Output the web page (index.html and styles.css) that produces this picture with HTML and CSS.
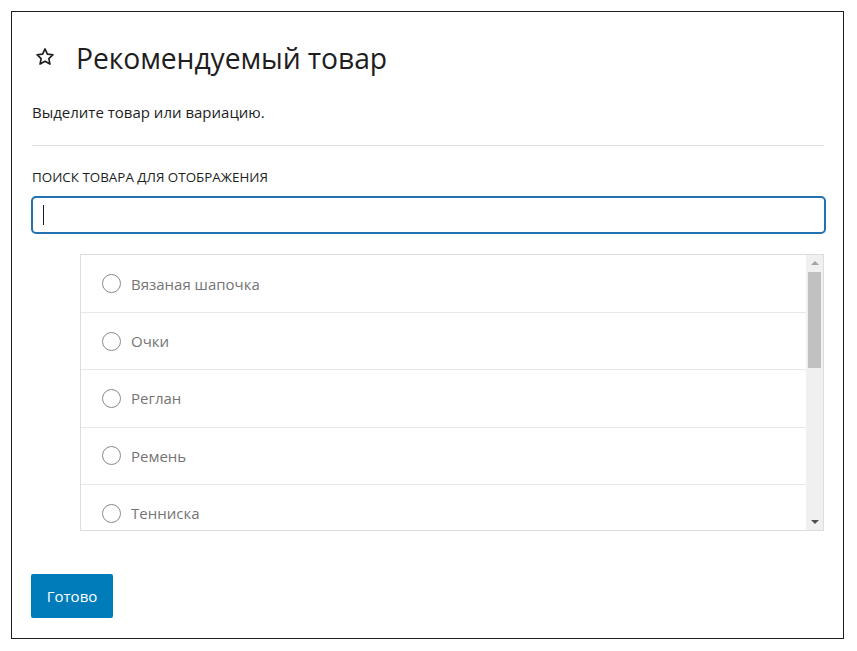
FILE: index.html
```html
<!DOCTYPE html>
<html lang="ru">
<head>
<meta charset="utf-8">
<link rel="stylesheet" href="styles.css">
</head>
<body>
<div class="panel">
  <header class="head">
    <svg class="star" width="22" height="22" viewBox="0 0 24 24"><path d="M12 3.2l2.6 5.6 6.1.7-4.5 4.2 1.2 6-5.4-3-5.4 3 1.2-6-4.5-4.2 6.1-.7z" fill="none" stroke="#1e1e1e" stroke-width="1.8" stroke-linejoin="round"/></svg>
    <h1 class="title">Рекомендуемый товар</h1>
  </header>
  <p class="desc">Выделите товар или вариацию.</p>
  <hr class="sep">
  <label class="label">ПОИСК ТОВАРА ДЛЯ ОТОБРАЖЕНИЯ</label>
  <div class="input"><span class="caret"></span></div>
  <div class="listwrap">
    <div class="list">
      <div class="row"><span class="radio"></span><span class="name">Вязаная шапочка</span></div>
      <div class="row"><span class="radio"></span><span class="name">Очки</span></div>
      <div class="row"><span class="radio"></span><span class="name">Реглан</span></div>
      <div class="row"><span class="radio"></span><span class="name">Ремень</span></div>
      <div class="row"><span class="radio"></span><span class="name">Тенниска</span></div>
    </div>
    <div class="scrollbar">
      <span class="arrow up"></span>
      <span class="thumb"></span>
      <span class="track"></span>
      <span class="arrow down"></span>
    </div>
  </div>
  <button class="btn">Готово</button>
</div>
</body>
</html>
```
FILE: styles.css
```css
* { box-sizing: border-box; }
html, body { margin: 0; background: #fff; }
body { font-family: "Open Sans", "Noto Sans", sans-serif; color: #1e1e1e; padding: 11px; }
.panel {
  width: 833px; height: 628px;
  border: 1px solid #1e1e1e;
  padding: 0 18px 0 20px;
  display: flex; flex-direction: column;
}
.head { display: flex; align-items: center; margin-top: 26px; height: 40px; }
.star { margin-left: 2px; margin-right: 20px; margin-top: -2px; }
.title { font-size: 28.3px; font-weight: 400; margin: 0; letter-spacing: -0.1px; }
.desc { font-size: 15px; margin: 24px 0 0; line-height: 20px; }
.sep { border: 0; border-top: 1px solid #e0e0e0; margin: 23px 0 0; width: 792px; }
.label { font-size: 13.4px; font-weight: 500; margin-top: 23px; line-height: 16px; }
.input {
  margin-top: 11px; width: 795px; margin-left: -1px; height: 38px;
  border: 2px solid #2271b1; border-radius: 5px;
  display: flex; align-items: center; padding-left: 10px;
}
.caret { width: 1px; height: 20px; background: #1e1e1e; }
.listwrap {
  margin: 20px 0 0 48px; width: 744px; height: 277px;
  border: 1px solid #ddd; display: flex; overflow: hidden;
}
.list { flex: 1; }
.row {
  border-bottom: 1px solid #e8e8e8;
  display: flex; align-items: center; padding-left: 21px;
}
.row:first-child { height: 58px; }
.row + .row { height: 57.3px; }
.radio {
  width: 19px; height: 19px; border-radius: 50%;
  border: 1px solid #8a8a8a; margin-right: 10px;
}
.name { font-size: 15px; color: #757575; }
.scrollbar { width: 17px; background: #f0f0f0; display: flex; flex-direction: column; align-items: center; }
.arrow { width: 0; height: 0; border-left: 4px solid transparent; border-right: 4px solid transparent; margin: 6px 0; }
.arrow.up { border-bottom: 4px solid #a3a3a3; }
.arrow.down { border-top: 4px solid #505050; }
.thumb { width: 13px; height: 96px; background: #c1c1c1; margin-top: 1px; }
.track { flex: 1; }
.btn {
  margin-top: 43px; width: 82px; height: 44px; margin-left: -1px;
  background: #007cba; color: #fff; border: 0; border-radius: 2px;
  font-family: inherit; font-size: 15px;
}
```
